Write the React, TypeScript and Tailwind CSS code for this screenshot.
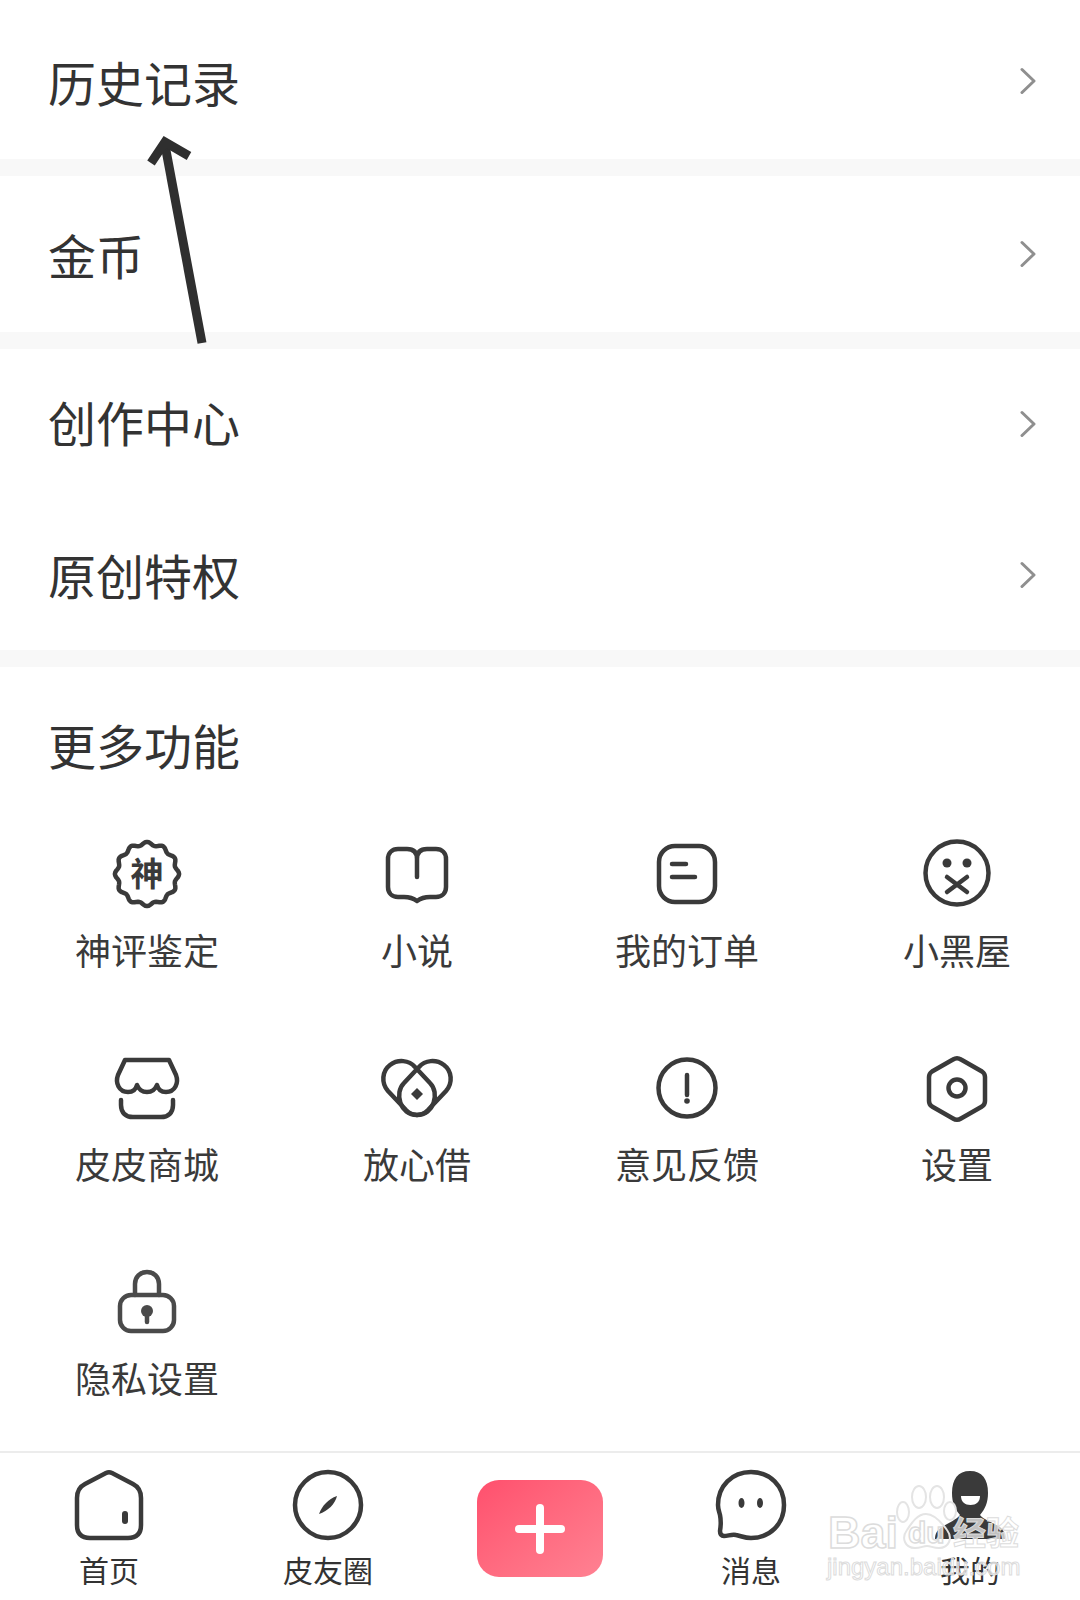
import React from "react";

const Chevron = () => (
  <svg width="18" height="30" viewBox="0 0 18 30" fill="none" className="text-[#8f8f8f]">
    <path d="M4 3.5 L16 15 L4 26.5" stroke="currentColor" strokeWidth="3" strokeLinecap="round" strokeLinejoin="round" />
  </svg>
);

const Row = ({ title, className, textClass }: { title: string; className: string; textClass: string }) => (
  <div className={`flex items-center justify-between pl-12 pr-[44px] bg-white ${className}`}>
    <span className={`text-[48px] leading-none text-[#333] ${textClass}`}>{title}</span>
    <Chevron />
  </div>
);

const Gap = () => <div className="h-[17px] bg-[#f8f8f8]" />;

const badgePath = (() => {
  const pts: string[] = [];
  for (let i = 0; i < 120; i++) {
    const t = (i / 120) * Math.PI * 2;
    const r = 30.5 + 1.6 * Math.cos(t * 12);
    pts.push(`${(40 + r * Math.sin(t)).toFixed(2)} ${(39 - r * Math.cos(t)).toFixed(2)}`);
  }
  return "M" + pts.join("L") + "Z";
})();

const Icon = ({ children, color = "#3a3a3a" }: { children: React.ReactNode; color?: string }) => (
  <svg width="80" height="80" viewBox="0 0 80 80" fill="none" stroke={color} strokeWidth="4.5" strokeLinecap="round" strokeLinejoin="round">
    {children}
  </svg>
);

const tools: { label: string; icon: React.ReactNode }[] = [
  {
    label: "神评鉴定",
    icon: (
      <Icon>
        <path d={badgePath} />
        <text x="40" y="51" textAnchor="middle" fontSize="33" fontWeight="700" fill="#3a3a3a" stroke="none">神</text>
      </Icon>
    ),
  },
  {
    label: "小说",
    icon: (
      <Icon>
        <path d="M40 24C40 17 36 14 30 14H21C15 14 11 18 11 24V52C11 58 15 62 21 62H27C32 62 36 63 40 66C44 63 48 62 53 62H59C65 62 69 58 69 52V24C69 18 65 14 59 14H50C44 14 40 17 40 24V42" />
      </Icon>
    ),
  },
  {
    label: "我的订单",
    icon: (
      <Icon>
        <rect x="12" y="11" width="56" height="56" rx="16" />
        <path d="M25 29H39M25 42H48" />
      </Icon>
    ),
  },
  {
    label: "小黑屋",
    icon: (
      <Icon>
        <circle cx="40" cy="38" r="31.5" />
        <circle cx="30" cy="28" r="4.5" fill="#3a3a3a" stroke="none" />
        <circle cx="50" cy="28" r="4.5" fill="#3a3a3a" stroke="none" />
        <path d="M30 42L50 57M50 42L30 57" />
      </Icon>
    ),
  },
  {
    label: "皮皮商城",
    icon: (
      <Icon>
        <path d="M18 11H62L69 26C72 34 68 43 59 43C54 43 51 40 50 36C48 41 45 43 40 43C35 43 32 41 30 36C29 40 26 43 21 43C12 43 8 34 11 26Z" />
        <path d="M14 51V56C14 64 19 68 26 68H54C61 68 66 64 66 56V51" />
      </Icon>
    ),
  },
  {
    label: "放心借",
    icon: (
      <Icon>
        <path d="M40 66C36 66 32 64 29 61L11 42C4 34 5 22 13 16C21 10 32 11 38 18L53 34C63 44 57 66 40 66Z" />
        <path d="M40 66C44 66 48 64 51 61L69 42C76 34 75 22 67 16C59 10 48 11 42 18L27 34C17 44 23 66 40 66Z" />
        <path d="M40 39L46 45L40 51L34 45Z" fill="#3a3a3a" stroke="none" />
      </Icon>
    ),
  },
  {
    label: "意见反馈",
    icon: (
      <Icon>
        <circle cx="40" cy="39" r="28.5" />
        <path d="M40 26V46" />
        <circle cx="40" cy="52" r="2.8" fill="#3a3a3a" stroke="none" />
      </Icon>
    ),
  },
  {
    label: "设置",
    icon: (
      <Icon>
        <path d="M36 10.5Q40 8 44 10.5L65 22.5Q68 24.5 68 28V52Q68 55.5 65 57.5L44 69.5Q40 72 36 69.5L15 57.5Q12 55.5 12 52V28Q12 24.5 15 22.5Z" />
        <circle cx="40" cy="39" r="8.5" />
      </Icon>
    ),
  },
  {
    label: "隐私设置",
    icon: (
      <Icon color="#4a4a4a">
        <path d="M28 32V21C28 14 33 9 40 9C47 9 52 14 52 21V32" />
        <rect x="13" y="32" width="54" height="36" rx="11" />
        <circle cx="40" cy="48" r="6" fill="#4a4a4a" stroke="none" />
        <path d="M40 50V59" />
      </Icon>
    ),
  },
];

const NavItem = ({ label, width, children }: { label: string; width: string; children: React.ReactNode }) => (
  <div className={`flex flex-col items-center ${width}`}>
    {children}
    <span className="text-[30px] leading-[40px] mt-[4px] text-[#333]">{label}</span>
  </div>
);

export default function App() {
  return (
    <div className="relative w-[1080px] h-[1600px] overflow-hidden bg-white [font-family:'Noto_Sans_CJK_SC',sans-serif]">
      <Row title="历史记录" className="h-[159px] pt-[3px]" textClass="mt-[-1px]" />
      <Gap />
      <Row title="金币" className="h-[156px]" textClass="mt-[-1px]" />
      <Gap />
      <Row title="创作中心" className="h-[150px]" textClass="mt-[-6px]" />
      <Row title="原创特权" className="h-[151px]" textClass="mt-[-2px]" />
      <Gap />

      <div className="h-[784px] flex flex-col">
        <div className="h-[154px] mb-[14px] flex items-center pl-12 text-[48px] leading-none text-[#333]">更多功能</div>
        <div className="grid grid-cols-[repeat(4,270px)] pl-3 gap-y-[72px]">
          {tools.map((t) => (
            <div key={t.label} className="flex flex-col items-center h-[142px]">
              {t.icon}
              <span className="mt-[9px] text-[36px] leading-[50px] text-[#3a3a3a]">{t.label}</span>
            </div>
          ))}
        </div>
      </div>

      <div className="flex h-[148px] border-t-2 border-[#ececec] pt-[12px]">
        <NavItem label="首页" width="w-[218px]">
          <Icon>
            <path d="M37 8Q40 6.5 43 8L64 19Q72 23 72 33V60Q72 73 59 73H21Q8 73 8 60V33Q8 23 16 19Z" />
            <rect x="53" y="46" width="6" height="13" rx="3" fill="#3a3a3a" stroke="none" />
          </Icon>
        </NavItem>
        <NavItem label="皮友圈" width="w-[220px]">
          <Icon>
            <path d="M40 7C58 7 73 22 73 40C73 58 58 73 40 73C22 73 7 58 7 40C7 22 22 7 40 7Z" />
            <path d="M31 49C34 41 40 34 49 31C47 39 40 46 31 49Z" fill="#3a3a3a" stroke="none" />
          </Icon>
        </NavItem>
        <div className="w-[204px] flex justify-center pt-[15px]">
          <div className="w-[126px] h-[97px] rounded-[22px] flex items-center justify-center bg-gradient-to-br from-[#ff4f6d] to-[#ff8192]">
            <div className="relative w-[50px] h-[50px]">
              <div className="absolute left-0 top-[21px] w-[50px] h-[8px] rounded-full bg-white" />
              <div className="absolute top-0 left-[21px] h-[50px] w-[8px] rounded-full bg-white" />
            </div>
          </div>
        </div>
        <NavItem label="消息" width="w-[218px]">
          <Icon>
            <path d="M40 7C59 7 73 21 73 40C73 59 59 73 40 73C34 73 30 71 25 70C21 69 17 71 13 71C10 71 9 69 9 66C10 60 10 55 9 50C8 46 7 44 7 40C7 21 21 7 40 7Z" />
            <ellipse cx="30.5" cy="38" rx="3" ry="5" fill="#3a3a3a" stroke="none" />
            <ellipse cx="49" cy="38" rx="3" ry="5" fill="#3a3a3a" stroke="none" />
          </Icon>
        </NavItem>
        <NavItem label="我的" width="w-[220px]">
          <Icon>
            <path d="M40 6C52 6 58 14 58 28C58 38 55 44 50 50C54 55 64 58 70 62C74 65 75 70 75 74H5C5 69 7 65 12 62C18 58 26 55 30 50C25 44 22 38 22 28C22 14 28 6 40 6Z" fill="#3a3a3a" stroke="none" />
            <path d="M31 31H50C50 37 46 40 40.5 40C35 40 31 37 31 31Z" fill="#fff" stroke="none" />
          </Icon>
        </NavItem>
      </div>

      {/* annotation arrow drawn over the list */}
      <svg className="absolute left-[130px] top-[125px]" width="90" height="230" viewBox="0 0 90 230" fill="none" stroke="#2f2f2f" strokeWidth="9">
        <path d="M72 218L35 20" />
        <path d="M21 38L35 17L59 31" />
      </svg>

      {/* baidu watermark */}
      <svg className="absolute left-[895px] top-[1484px]" width="62" height="68" viewBox="0 0 62 68" fill="none" stroke="#e4e4e4" strokeWidth="2">
        <ellipse cx="8" cy="28" rx="6" ry="10" />
        <ellipse cx="24" cy="13" rx="7" ry="11" />
        <ellipse cx="42" cy="13" rx="7" ry="11" />
        <ellipse cx="55" cy="27" rx="6" ry="9" />
        <path d="M31 30C22 30 16 40 12 46C6 54 10 64 20 64C26 64 28 62 32 62C36 62 38 64 44 64C54 64 58 54 52 46C47 39 40 30 31 30Z" />
      </svg>
      <span className="absolute left-[828px] top-[1511px] text-[45px] leading-[44px] font-bold text-white/70 [-webkit-text-stroke:1.5px_#dcdcdc] [font-family:'Liberation_Sans',sans-serif]">Bai</span>
      <span className="absolute left-[908px] top-[1517px] text-[30px] leading-[32px] font-bold text-white/70 [-webkit-text-stroke:1.5px_#dcdcdc] [font-family:'Liberation_Sans',sans-serif]">du</span>
      <span className="absolute left-[953px] top-[1509px] text-[33px] leading-[44px] font-bold text-white/70 [-webkit-text-stroke:1px_#dcdcdc]">经验</span>
      <span className="absolute left-[827px] top-[1551px] text-[24px] leading-[32px] text-white/70 [-webkit-text-stroke:1px_#dcdcdc] [font-family:'Liberation_Sans',sans-serif]">jingyan.baidu.com</span>
    </div>
  );
}
